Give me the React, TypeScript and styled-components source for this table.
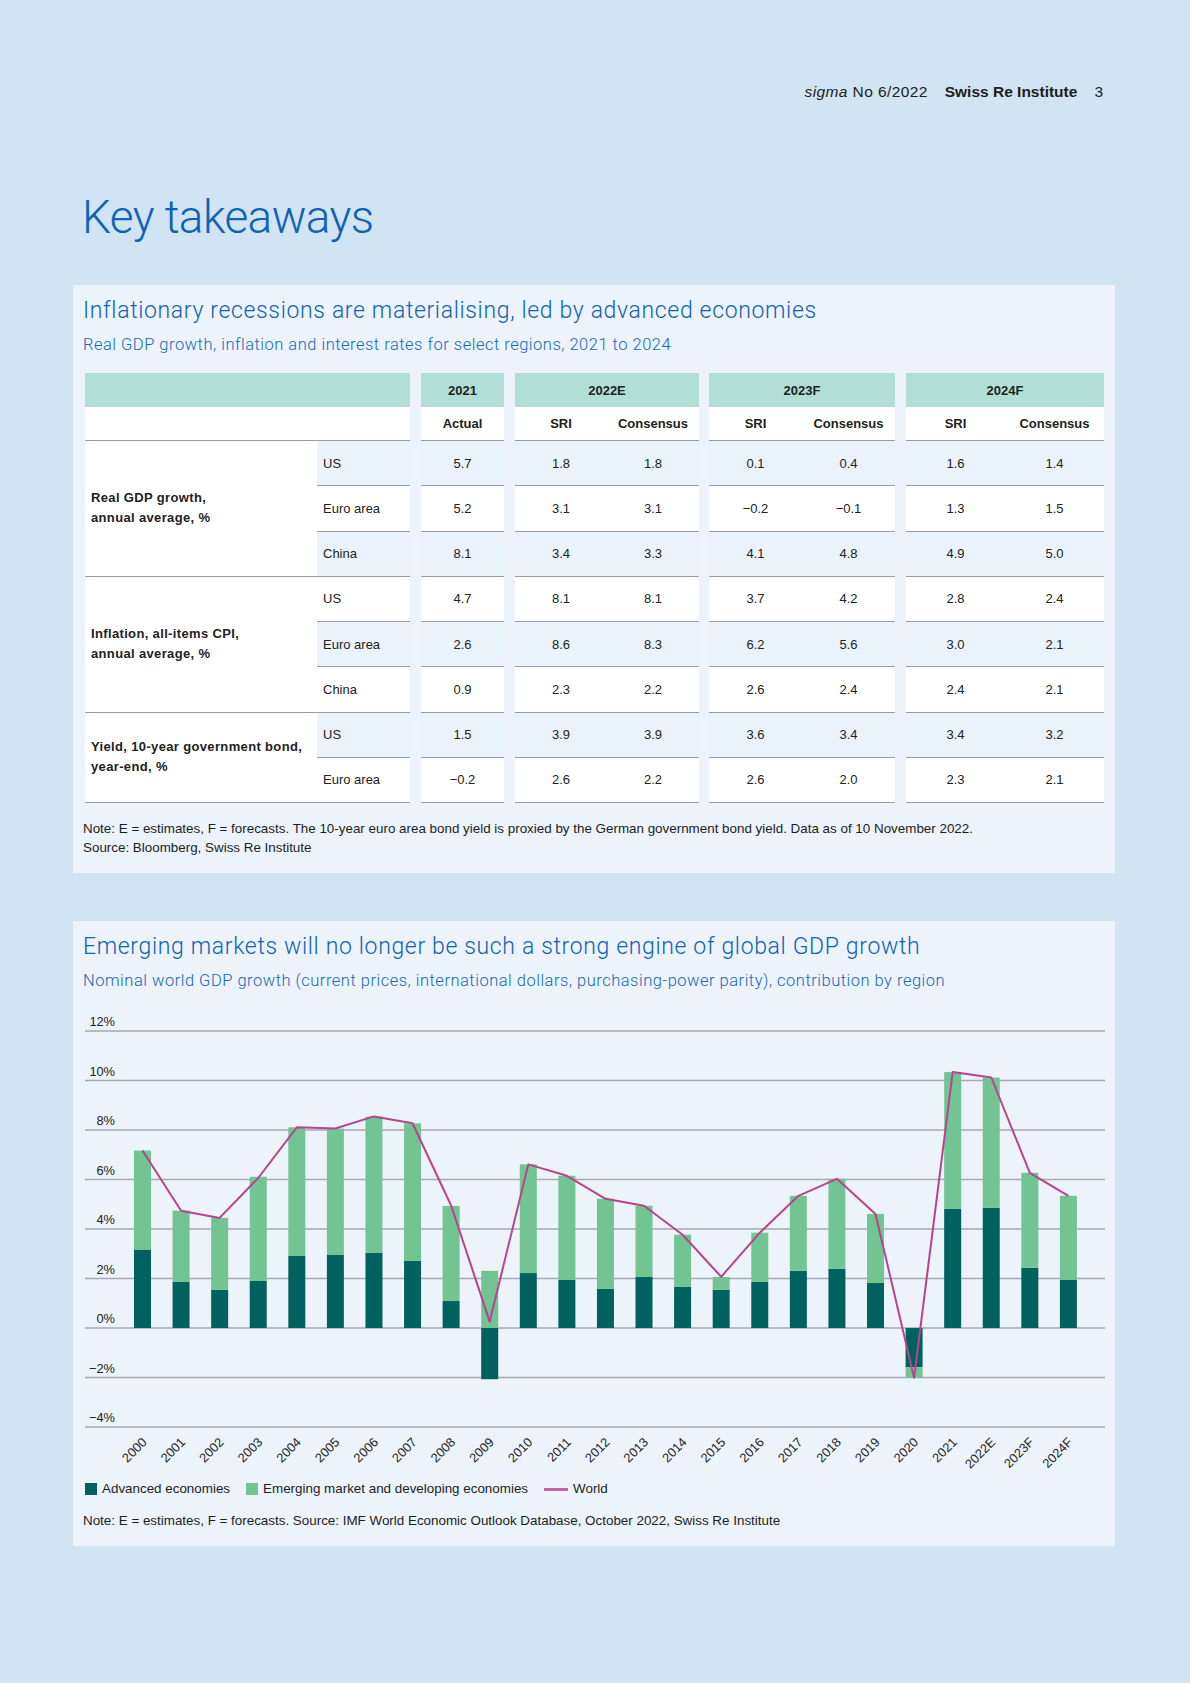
import React from 'react';
import styled, { createGlobalStyle } from 'styled-components';

const GlobalStyle = createGlobalStyle`
  html, body { margin: 0; padding: 0; background: #d1e4f4; }
  body { font-family: "Liberation Sans", Arial, sans-serif; color: #1d1d1d; }
  * { box-sizing: border-box; }
`;

const Page = styled.div`
  width: 1190px;
  min-height: 1683px;
  background: #d1e4f4;
  padding: 82px 75px 0 73px;
`;

const TopBar = styled.header`
  display: flex;
  justify-content: flex-end;
  align-items: baseline;
  gap: 17px;
  padding-right: 12px;
  font-size: 15.5px;
  line-height: 20px;
  color: #1d1d1d;
`;

const Issue = styled.span`
  letter-spacing: 0.4px;
`;

const Brand = styled.strong`
  font-weight: 700;
`;

const PageTitle = styled.h1`
  margin: 92px 0 0 9px;
  font-family: Roboto, "Liberation Sans", sans-serif;
  font-weight: 300;
  font-size: 46px;
  line-height: 46px;
  letter-spacing: -0.6px;
  color: #0f62b6;
`;

const Panel = styled.section<{ $top: number }>`
  margin-top: ${p => p.$top}px;
  background: #ecf3fb;
  padding: 13px 10px 16px 10px;
`;

const PanelTitle = styled.h2`
  margin: 0;
  font-family: Roboto, "Liberation Sans", sans-serif;
  font-weight: 300;
  font-size: 23px;
  line-height: 26px;
  letter-spacing: 0.65px;
  color: #0f62b6;
`;

const PanelSub = styled.p`
  margin: 11px 0 0 0;
  font-family: Roboto, "Liberation Sans", sans-serif;
  font-weight: 300;
  font-size: 16.5px;
  line-height: 20px;
  letter-spacing: 0.5px;
  color: #1668bb;
`;

const Note = styled.p<{ $top: number }>`
  margin: ${p => p.$top}px 0 0 0;
  font-size: 13.4px;
  line-height: 19px;
  color: #1d1d1d;
`;

/* ---------- table ---------- */

const TableGrid = styled.div`
  margin: 18px 0 0 2px;
  width: 1019px;
  display: grid;
  grid-template-columns: 232px 93px 11px 83px 11px 92px 92px 10px 93px 93px 11px 99px 99px;
  grid-template-rows: 34px 34px repeat(8, 45.25px);
  font-size: 13px;
  color: #222;
`;

const HeadCell = styled.div<{ $row: number; $col: number; $span?: number; $teal?: boolean }>`
  grid-row: ${p => p.$row};
  grid-column: ${p => p.$col} / span ${p => p.$span ?? 1};
  background: ${p => (p.$teal ? '#b1dfd6' : '#ffffff')};
  border-bottom: ${p => (p.$teal ? 'none' : '1px solid #9b9ba3')};
  display: flex;
  align-items: center;
  justify-content: center;
  font-weight: 700;
`;

const GroupLabel = styled.div<{ $row: number; $span: number }>`
  grid-row: ${p => p.$row} / span ${p => p.$span};
  grid-column: 1;
  background: #ffffff;
  border-bottom: 1px solid #9b9ba3;
  display: flex;
  flex-direction: column;
  justify-content: center;
  padding-left: 6px;
  font-weight: 700;
  letter-spacing: 0.35px;
  line-height: 20px;
`;

const RegionCell = styled.div<{ $row: number; $shade: boolean }>`
  grid-row: ${p => p.$row};
  grid-column: 2;
  background: ${p => (p.$shade ? '#eaf2fb' : '#ffffff')};
  border-bottom: 1px solid #9b9ba3;
  display: flex;
  align-items: center;
  padding-left: 6px;
`;

const ValueCell = styled.div<{ $row: number; $col: number; $shade: boolean }>`
  grid-row: ${p => p.$row};
  grid-column: ${p => p.$col};
  background: ${p => (p.$shade ? '#eaf2fb' : '#ffffff')};
  border-bottom: 1px solid #9b9ba3;
  display: flex;
  align-items: center;
  justify-content: center;
`;

const groups = [
  {
    label: ['Real GDP growth,', 'annual average, %'],
    rows: [
      ['US', '5.7', '1.8', '1.8', '0.1', '0.4', '1.6', '1.4'],
      ['Euro area', '5.2', '3.1', '3.1', '\u22120.2', '\u22120.1', '1.3', '1.5'],
      ['China', '8.1', '3.4', '3.3', '4.1', '4.8', '4.9', '5.0'],
    ],
  },
  {
    label: ['Inflation, all-items CPI,', 'annual average, %'],
    rows: [
      ['US', '4.7', '8.1', '8.1', '3.7', '4.2', '2.8', '2.4'],
      ['Euro area', '2.6', '8.6', '8.3', '6.2', '5.6', '3.0', '2.1'],
      ['China', '0.9', '2.3', '2.2', '2.6', '2.4', '2.4', '2.1'],
    ],
  },
  {
    label: ['Yield, 10-year government bond,', 'year-end, %'],
    rows: [
      ['US', '1.5', '3.9', '3.9', '3.6', '3.4', '3.4', '3.2'],
      ['Euro area', '\u22120.2', '2.6', '2.2', '2.6', '2.0', '2.3', '2.1'],
    ],
  },
];

const valueCols = [4, 6, 7, 9, 10, 12, 13];

function ForecastTable() {
  const cells: React.ReactNode[] = [];
  let row = 3;
  groups.forEach((g, gi) => {
    cells.push(
      <GroupLabel key={`g${gi}`} $row={row} $span={g.rows.length}>
        {g.label.map(l => (
          <span key={l}>{l}</span>
        ))}
      </GroupLabel>
    );
    g.rows.forEach(r => {
      const shade = (row - 3) % 2 === 0;
      cells.push(
        <RegionCell key={`r${row}`} $row={row} $shade={shade}>
          {r[0]}
        </RegionCell>
      );
      r.slice(1).forEach((v, vi) => {
        cells.push(
          <ValueCell key={`v${row}-${vi}`} $row={row} $col={valueCols[vi]} $shade={shade}>
            {v}
          </ValueCell>
        );
      });
      row += 1;
    });
  });

  return (
    <TableGrid>
      <HeadCell $row={1} $col={1} $span={2} $teal />
      <HeadCell $row={1} $col={4} $teal>2021</HeadCell>
      <HeadCell $row={1} $col={6} $span={2} $teal>2022E</HeadCell>
      <HeadCell $row={1} $col={9} $span={2} $teal>2023F</HeadCell>
      <HeadCell $row={1} $col={12} $span={2} $teal>2024F</HeadCell>
      <HeadCell $row={2} $col={1} $span={2} />
      <HeadCell $row={2} $col={4}>Actual</HeadCell>
      <HeadCell $row={2} $col={6}>SRI</HeadCell>
      <HeadCell $row={2} $col={7}>Consensus</HeadCell>
      <HeadCell $row={2} $col={9}>SRI</HeadCell>
      <HeadCell $row={2} $col={10}>Consensus</HeadCell>
      <HeadCell $row={2} $col={12}>SRI</HeadCell>
      <HeadCell $row={2} $col={13}>Consensus</HeadCell>
      {cells}
    </TableGrid>
  );
}

/* ---------- chart ---------- */

const ChartSvg = styled.svg`
  display: block;
  margin: 20px 0 0 2px;
  font-family: "Liberation Sans", Arial, sans-serif;
`;

const ADV = '#00625f';
const EM = '#72c493';
const WORLD = '#b8438f';

const series: [string, number, number, number][] = [
  ['2000', 3.17, 4.0, 7.17],
  ['2001', 1.86, 2.88, 4.74],
  ['2002', 1.54, 2.91, 4.45],
  ['2003', 1.9, 4.21, 6.06],
  ['2004', 2.91, 5.2, 8.11],
  ['2005', 2.95, 5.11, 8.06],
  ['2006', 3.03, 5.51, 8.55],
  ['2007', 2.71, 5.56, 8.27],
  ['2008', 1.09, 3.84, 4.95],
  ['2009', -2.07, 2.31, 0.26],
  ['2010', 2.22, 4.39, 6.61],
  ['2011', 1.94, 4.21, 6.15],
  ['2012', 1.58, 3.64, 5.22],
  ['2013', 2.06, 2.88, 4.94],
  ['2014', 1.66, 2.11, 3.77],
  ['2015', 1.54, 0.52, 2.07],
  ['2016', 1.86, 1.99, 3.85],
  ['2017', 2.31, 3.03, 5.34],
  ['2018', 2.39, 3.64, 6.03],
  ['2019', 1.82, 2.79, 4.61],
  ['2020', -1.58, -0.43, -2.01],
  ['2021', 4.82, 5.52, 10.34],
  ['2022E', 4.86, 5.26, 10.12],
  ['2023F', 2.43, 3.84, 6.27],
  ['2024F', 1.94, 3.4, 5.34],
];

const ZERO = 317;
const PER = 24.75;
const yOf = (v: number) => ZERO - v * PER;
const cxOf = (i: number) => 38.2 + 38.58 * (i + 0.5);
const BAR_W = 17;

function GrowthChart() {
  const ticks = [12, 10, 8, 6, 4, 2, 0, -2, -4];
  const worldPts = series.map((s, i) => `${cxOf(i).toFixed(1)},${yOf(s[3]).toFixed(1)}`).join(' ');
  return (
    <ChartSvg width={1020} height={460} viewBox="0 0 1020 460">
      {ticks.map(t => (
        <g key={t}>
          <line x1={0} x2={1020} y1={yOf(t)} y2={yOf(t)} stroke="#a9a9b2" strokeWidth={1.4} />
          <text x={30} y={yOf(t) - 5} textAnchor="end" fontSize={12.8} fill="#222">
            {t < 0 ? `\u2212${Math.abs(t)}%` : `${t}%`}
          </text>
        </g>
      ))}
      {series.map((s, i) => {
        const [, adv, em] = s;
        const x = cxOf(i) - BAR_W / 2;
        let pos = 0;
        let neg = 0;
        const rects: React.ReactNode[] = [];
        [[adv, ADV], [em, EM]].forEach(([v, c], k) => {
          const val = v as number;
          if (val >= 0) {
            rects.push(<rect key={k} x={x} width={BAR_W} y={yOf(pos + val)} height={val * PER} fill={c as string} />);
            pos += val;
          } else {
            rects.push(<rect key={k} x={x} width={BAR_W} y={yOf(neg)} height={-val * PER} fill={c as string} />);
            neg += val;
          }
        });
        return <g key={s[0]}>{rects}</g>;
      })}
      <polyline points={worldPts} fill="none" stroke={WORLD} strokeWidth={2} strokeLinejoin="round" />
      {series.map((s, i) => (
        <text
          key={`l${s[0]}`}
          transform={`translate(${(cxOf(i) + 5).toFixed(1)} 432) rotate(-45)`}
          textAnchor="end"
          fontSize={12.8}
          fill="#222"
        >
          {s[0]}
        </text>
      ))}
    </ChartSvg>
  );
}

const Legend = styled.div`
  display: flex;
  align-items: center;
  margin: 10px 0 0 2px;
  font-size: 13.4px;
  line-height: 16px;
  color: #1d1d1d;
`;

const LegendItem = styled.span`
  display: flex;
  align-items: center;
  gap: 5px;
  margin-right: 16px;
`;

const Swatch = styled.span<{ $color: string }>`
  width: 12px;
  height: 12px;
  background: ${p => p.$color};
`;

const LineSwatch = styled.span`
  width: 24px;
  height: 3px;
  background: #c462a7;
`;

export default function App() {
  return (
    <>
      <GlobalStyle />
      <Page>
        <TopBar>
          <Issue>
            <em>sigma</em> No 6/2022
          </Issue>
          <Brand>Swiss Re Institute</Brand>
          <span>3</span>
        </TopBar>
        <PageTitle>Key takeaways</PageTitle>

        <Panel $top={45}>
          <PanelTitle>Inflationary recessions are materialising, led by advanced economies</PanelTitle>
          <PanelSub>Real GDP growth, inflation and interest rates for select regions, 2021 to 2024</PanelSub>
          <ForecastTable />
          <Note $top={16}>
            Note: E = estimates, F = forecasts. The 10-year euro area bond yield is proxied by the German government
            bond yield. Data as of 10 November 2022.
            <br />
            Source: Bloomberg, Swiss Re Institute
          </Note>
        </Panel>

        <Panel $top={48}>
          <PanelTitle>Emerging markets will no longer be such a strong engine of global GDP growth</PanelTitle>
          <PanelSub>
            Nominal world GDP growth (current prices, international dollars, purchasing-power parity), contribution by
            region
          </PanelSub>
          <GrowthChart />
          <Legend>
            <LegendItem>
              <Swatch $color={ADV} />
              Advanced economies
            </LegendItem>
            <LegendItem>
              <Swatch $color={EM} />
              Emerging market and developing economies
            </LegendItem>
            <LegendItem>
              <LineSwatch />
              World
            </LegendItem>
          </Legend>
          <Note $top={14}>
            Note: E = estimates, F = forecasts. Source: IMF World Economic Outlook Database, October 2022, Swiss Re
            Institute
          </Note>
        </Panel>
      </Page>
    </>
  );
}
